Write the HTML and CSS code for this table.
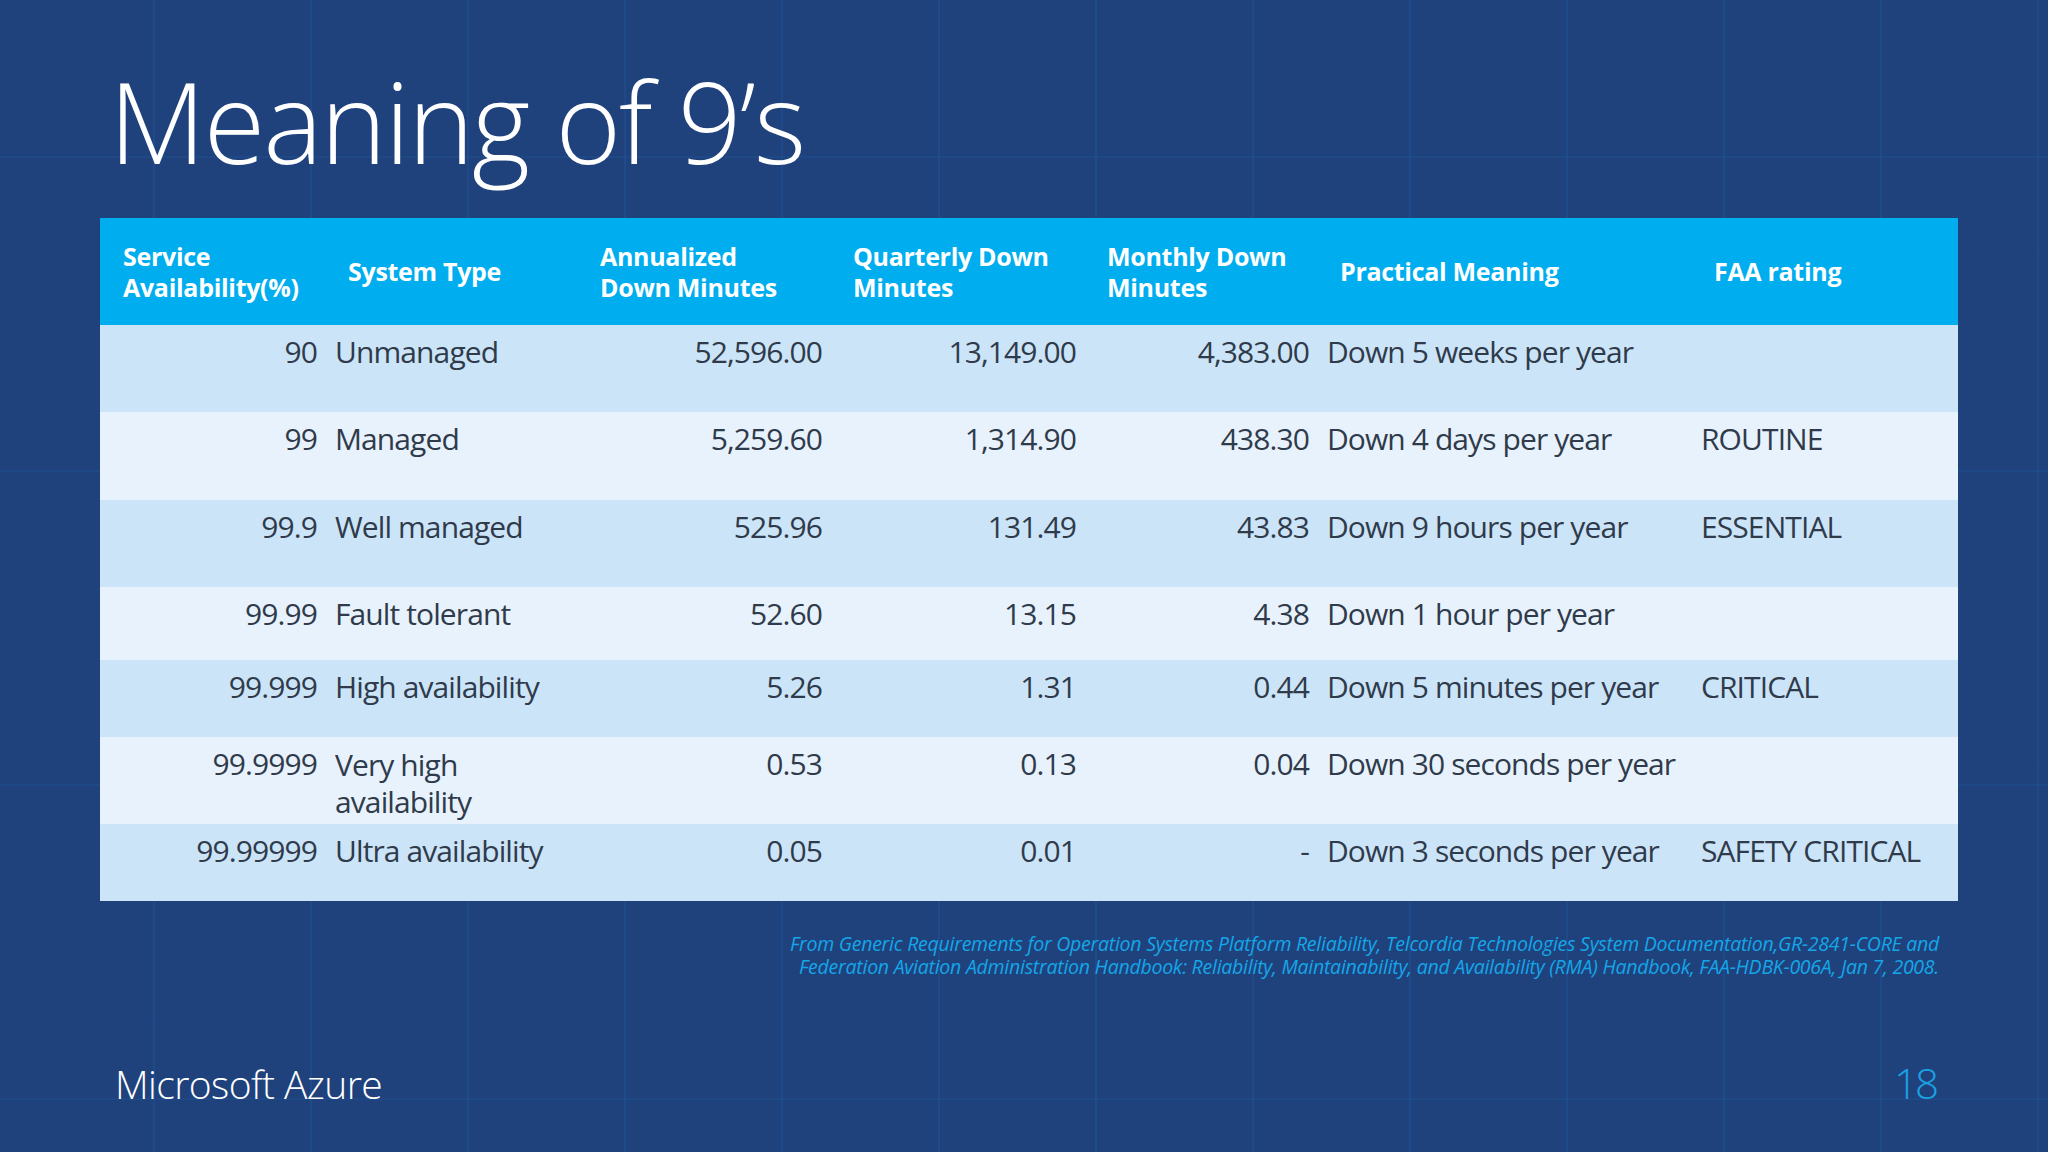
FILE: index.html
```html
<!DOCTYPE html>
<html lang="en">
<head>
<meta charset="utf-8">
<title>Meaning of 9's</title>
<link rel="stylesheet" href="styles.css">
</head>
<body>
<div class="slide">
  <h1 class="title">Meaning of 9’s</h1>
  <table class="nines">
    <colgroup>
      <col class="c1"><col class="c2"><col class="c3"><col class="c4"><col class="c5"><col class="c6"><col class="c7">
    </colgroup>
    <thead>
      <tr>
        <th>Service<br>Availability(%)</th>
        <th>System Type</th>
        <th>Annualized<br>Down Minutes</th>
        <th>Quarterly Down<br>Minutes</th>
        <th>Monthly Down<br>Minutes</th>
        <th>Practical Meaning</th>
        <th>FAA rating</th>
      </tr>
    </thead>
    <tbody>
      <tr class="r1">
        <td class="num">90</td><td class="txt">Unmanaged</td><td class="num">52,596.00</td><td class="num">13,149.00</td><td class="num">4,383.00</td><td class="txt">Down 5 weeks per year</td><td class="txt"></td>
      </tr>
      <tr class="r2">
        <td class="num">99</td><td class="txt">Managed</td><td class="num">5,259.60</td><td class="num">1,314.90</td><td class="num">438.30</td><td class="txt">Down 4 days per year</td><td class="txt">ROUTINE</td>
      </tr>
      <tr class="r3">
        <td class="num">99.9</td><td class="txt">Well managed</td><td class="num">525.96</td><td class="num">131.49</td><td class="num">43.83</td><td class="txt">Down 9 hours per year</td><td class="txt">ESSENTIAL</td>
      </tr>
      <tr class="r4">
        <td class="num">99.99</td><td class="txt">Fault tolerant</td><td class="num">52.60</td><td class="num">13.15</td><td class="num">4.38</td><td class="txt">Down 1 hour per year</td><td class="txt"></td>
      </tr>
      <tr class="r5">
        <td class="num">99.999</td><td class="txt">High availability</td><td class="num">5.26</td><td class="num">1.31</td><td class="num">0.44</td><td class="txt">Down 5 minutes per year</td><td class="txt">CRITICAL</td>
      </tr>
      <tr class="r6">
        <td class="num">99.9999</td><td class="txt wrap"><span class="ln">Very high</span><span class="ln">availability</span></td><td class="num">0.53</td><td class="num">0.13</td><td class="num">0.04</td><td class="txt">Down 30 seconds per year</td><td class="txt"></td>
      </tr>
      <tr class="r7">
        <td class="num">99.99999</td><td class="txt">Ultra availability</td><td class="num">0.05</td><td class="num">0.01</td><td class="num">-</td><td class="txt">Down 3 seconds per year</td><td class="txt">SAFETY CRITICAL</td>
      </tr>
    </tbody>
  </table>
  <p class="cite">From Generic Requirements for Operation Systems Platform Reliability, Telcordia Technologies System Documentation,GR-2841-CORE and<br>Federation Aviation Administration Handbook: Reliability, Maintainability, and Availability (RMA) Handbook, FAA-HDBK-006A, Jan 7, 2008.</p>
  <footer class="foot">
    <span class="brand">Microsoft Azure</span>
    <span class="pagenum">18</span>
  </footer>
</div>
</body>
</html>
```

FILE: styles.css
```css
html, body {
  margin: 0;
  padding: 0;
}
body {
  width: 2048px;
  height: 1152px;
  overflow: hidden;
  background-color: #1f427d;
  font-family: "Open Sans", "Noto Sans", sans-serif;
}
.slide {
  width: 2048px;
  height: 1152px;
  box-sizing: border-box;
  padding: 0 90px 0 100px;
  display: flex;
  flex-direction: column;
  background-image:
    repeating-linear-gradient(90deg, transparent 0, transparent 153px, rgba(30, 90, 160, 0.35) 153px, rgba(30, 90, 160, 0.35) 155px, transparent 155px, transparent 157px),
    repeating-linear-gradient(180deg, transparent 0, transparent 156px, rgba(30, 90, 160, 0.25) 156px, rgba(30, 90, 160, 0.25) 158px, transparent 158px, transparent 314px);
}
.title {
  margin: 64px 0 0 9px;
  font-weight: 300;
  font-size: 112px;
  line-height: 113px;
  height: 112px;
  color: #ffffff;
  letter-spacing: -2px;
  white-space: nowrap;
}
.nines {
  margin-top: 42px;
  width: 1858px;
  border-collapse: collapse;
  table-layout: fixed;
}
.c1 { width: 225px; }
.c2 { width: 252px; }
.c3 { width: 253px; }
.c4 { width: 254px; }
.c5 { width: 233px; }
.c6 { width: 374px; }
.c7 { width: 267px; }
.nines thead tr {
  height: 107px;
  background-color: #00aeef;
}
.nines th {
  padding: 0 0 0 23px;
  text-align: left;
  vertical-align: middle;
  color: #ffffff;
  font-weight: 700;
  font-size: 25px;
  line-height: 31px;
  letter-spacing: -0.3px;
  white-space: nowrap;
}
.nines td {
  padding: 9px 8px 0 8px;
  vertical-align: top;
  font-size: 30px;
  line-height: 36px;
  color: #2f3b4b;
  letter-spacing: -0.9px;
  white-space: nowrap;
}
.nines td.num { text-align: right; }
.nines td.txt { text-align: left; padding-left: 10px; }
.nines td.wrap { line-height: 37px; }
.ln { display: block; }
.nines tbody tr:nth-child(odd) { background-color: #cce4f8; }
.nines tbody tr:nth-child(even) { background-color: #e8f2fc; }
.r1 { height: 87px; }
.r2 { height: 88px; }
.r3 { height: 87px; }
.r4 { height: 73px; }
.r5 { height: 77px; }
.r6 { height: 87px; }
.r7 { height: 77px; }
.cite {
  margin: 31px 19px 0 0;
  text-align: right;
  font-style: italic;
  font-size: 19.5px;
  line-height: 23px;
  color: #15a6e8;
  letter-spacing: -0.25px;
  white-space: nowrap;
}
.foot {
  margin-top: auto;
  margin-bottom: 48px;
  display: flex;
  justify-content: space-between;
  align-items: baseline;
  padding: 0 22px 0 15px;
}
.brand {
  font-size: 39px;
  line-height: 40px;
  font-weight: 300;
  color: #ffffff;
  letter-spacing: -0.6px;
}
.pagenum {
  font-size: 42px;
  line-height: 42px;
  font-weight: 300;
  color: #1ba1e2;
  letter-spacing: -3px;
}
```
